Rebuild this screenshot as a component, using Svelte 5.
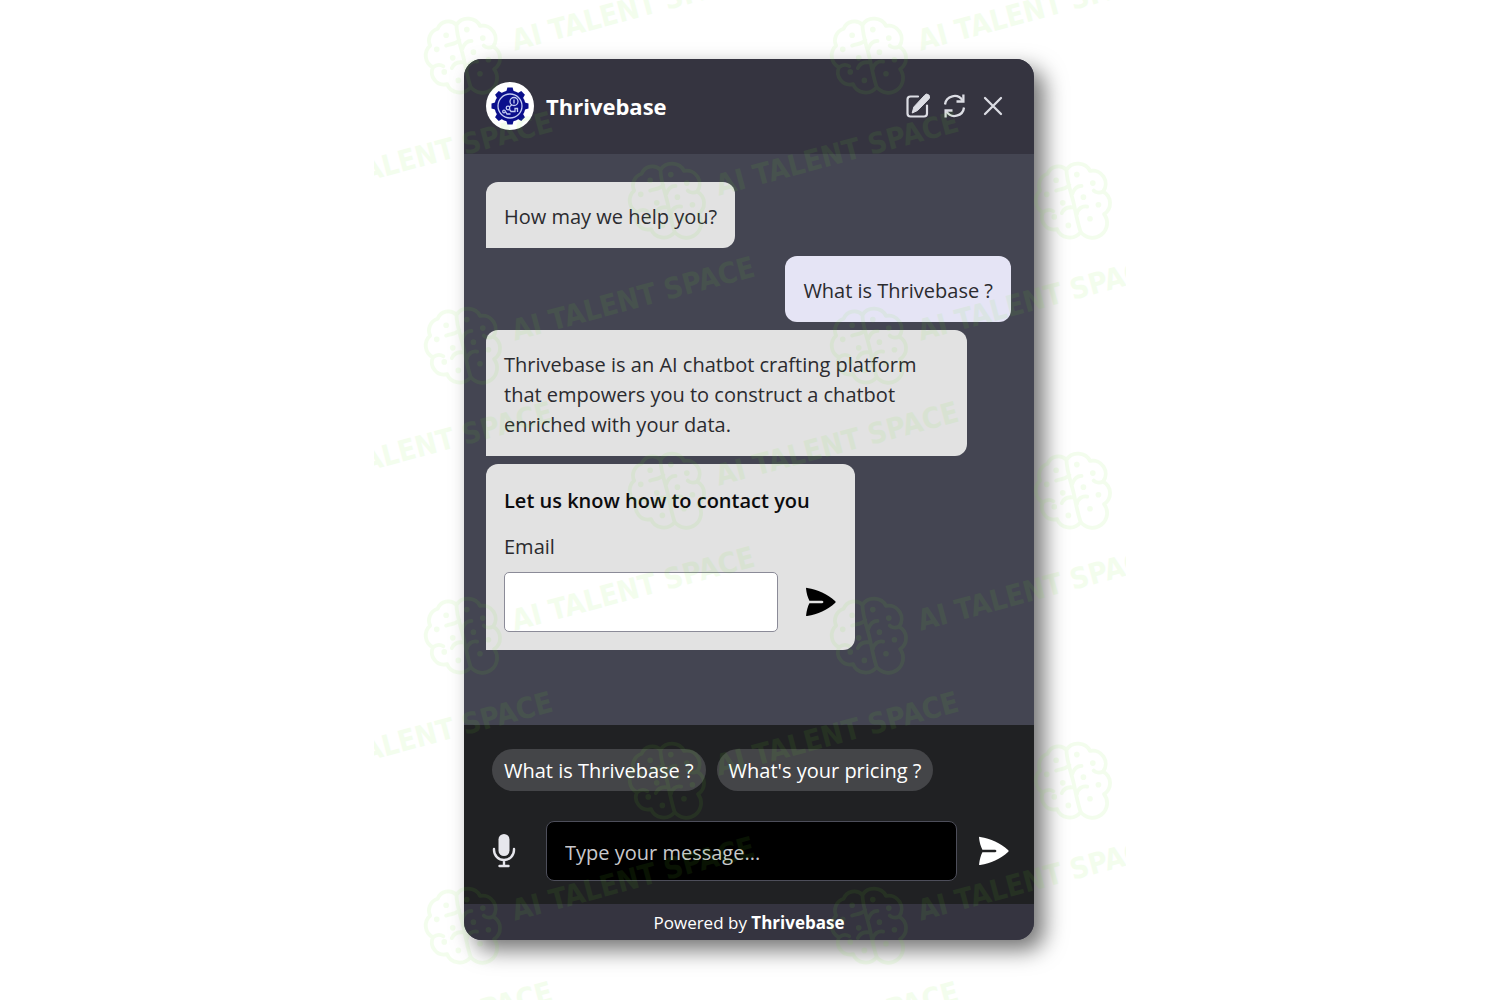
<script lang="ts">
  type Message = { from: "bot" | "user"; text: string };

  const messages: Message[] = [
    { from: "bot", text: "How may we help you?" },
    { from: "user", text: "What is Thrivebase ?" },
    {
      from: "bot",
      text: "Thrivebase is an AI chatbot crafting platform that empowers you to construct a chatbot enriched with your data."
    }
  ];
  const suggestions = ["What is Thrivebase ?", "What's your pricing ?"];

  let email = $state("");
  let draft = $state("");

  // Staggered rows: odd rows shift left by half a tile.
  const marks = Array.from({ length: 8 }, (_, row) =>
    [0, 1, 2]
      .map((col) => ({ x: (row % 2 ? -112 : 90) + col * 406, y: 55 + row * 145 }))
      .filter((mark) => mark.x < 752)
  ).flat();
</script>

{#snippet sendIcon()}
  <svg width="32" height="30" viewBox="0 0 32 30" aria-hidden="true">
    <path
      fill="currentColor"
      d="M1 1.6C1 .9 1.5.8 2.2.9C13 2.7 22 6.5 30.3 14.2C30.8 14.7 30.8 15.3 30.3 15.8C22 23.5 13 27.3 2.2 29.1C1.5 29.2.9 29 1.1 28.2C1.7 23.5 2.7 19.5 4.4 16.2H17.2C18.8 16.2 18.8 13.8 17.2 13.8H4.4C2.7 10.5 1.5 6.5 1 1.6Z"
    />
  </svg>
{/snippet}

<main>
  <section class="chat" aria-label="Thrivebase chat">
    <header>
      <svg class="avatar" viewBox="0 0 48 48" aria-hidden="true">
        <circle cx="24" cy="24" r="24" fill="#fff" />
        <g fill="#0b0f8c">
          <circle cx="24" cy="24" r="15.5" />
          {#each [0, 45, 90, 135, 180, 225, 270, 315] as angle}
            <path d="M20.2 10 21.4 5.5H26.6L27.8 10Z" transform="rotate({angle} 24 24)" />
          {/each}
        </g>
        <g fill="none" stroke="#c3cbf2" stroke-width="1.3">
          <circle cx="24" cy="24" r="12" />
          <circle cx="28" cy="19.5" r="4" />
          <circle cx="22" cy="26" r="1.8" />
          <circle cx="18" cy="29.5" r="1.3" />
          <path d="M28 17.5V21.5M23.5 27.5 25 29.5H29V26.5H31.5V30M19.5 29.5 21 32H24.5M24 24.5 26 22.5" />
        </g>
      </svg>
      <h1>Thrivebase</h1>
      <div class="actions">
        <button type="button" aria-label="New chat">
          <svg width="26" height="26" viewBox="0 0 26 26" aria-hidden="true">
            <path
              d="M14 3.5H6.5A3 3 0 0 0 3.5 6.5V20.5A3 3 0 0 0 6.5 23.5H20A3 3 0 0 0 23 20.5V12.5"
              fill="none"
              stroke="currentColor"
              stroke-width="2.2"
              stroke-linecap="round"
            />
            <path
              d="M20.7 2.2A2.7 2.7 0 0 1 25 5.8L13.6 17.5 8.2 20 9.8 14Z"
              fill="currentColor"
              stroke="currentColor"
              stroke-linejoin="round"
            />
          </svg>
        </button>
        <button type="button" aria-label="Restart">
          <svg width="26" height="26" viewBox="0 0 26 26" aria-hidden="true">
            <g fill="none" stroke="currentColor" stroke-width="2.3">
              <path d="M3 11.5A9.5 9.5 0 0 1 20.5 7.5M22 14.5A9.5 9.5 0 0 1 4.5 18.5" />
              <path d="M21.4 1.5V8.5H14.5M3.6 24.5V17.5H10.5" />
            </g>
          </svg>
        </button>
        <button type="button" aria-label="Close">
          <svg width="26" height="26" viewBox="0 0 26 26" aria-hidden="true">
            <path d="M5 5 21 21M21 5 5 21" stroke="currentColor" stroke-width="2.3" stroke-linecap="round" />
          </svg>
        </button>
      </div>
    </header>

    <div class="messages">
      {#each messages as message}
        <p class="bubble" class:user={message.from === "user"}>{message.text}</p>
      {/each}
      <form class="bubble contact" onsubmit={(e) => e.preventDefault()}>
        <h2>Let us know how to contact you</h2>
        <label for="email">Email</label>
        <div class="field">
          <input id="email" type="email" bind:value={email} />
          <button type="submit" aria-label="Send email">{@render sendIcon()}</button>
        </div>
      </form>
    </div>

    <div class="composer">
      <div class="suggestions">
        {#each suggestions as suggestion}
          <button type="button" onclick={() => (draft = suggestion)}>{suggestion}</button>
        {/each}
      </div>
      <form class="entry" onsubmit={(e) => e.preventDefault()}>
        <button class="mic" type="button" aria-label="Record a message">
          <svg width="24" height="36" viewBox="0 0 24 36" aria-hidden="true">
            <rect x="6.5" y="1" width="11" height="22" rx="5.5" fill="currentColor" />
            <path
              d="M2 16V17A10 10 0 0 0 22 17V16M12 27V33M7.5 33H16.5"
              fill="none"
              stroke="currentColor"
              stroke-width="2.4"
              stroke-linecap="round"
            />
          </svg>
        </button>
        <input type="text" aria-label="Message" placeholder="Type your message..." bind:value={draft} />
        <button class="send" type="submit" aria-label="Send message">{@render sendIcon()}</button>
      </form>
    </div>

    <footer>Powered by <strong>Thrivebase</strong></footer>
  </section>

  <svg class="watermark" aria-hidden="true">
    {#each marks as mark}
      <g transform="translate({mark.x} {mark.y})">
        <g transform="scale(.94)">
          <path
            class="brain"
            d="M-8-32A14 13 0 0 1 17-31A14 14 0 0 1 31-9A14 14 0 0 1 32 15A14 14 0 0 1 7 34A14 13 0 0 1-18 31A13 13 0 0 1-33 13A14 14 0 0 1-36-10A13 13 0 0 1-28-28A12 12 0 0 1-8-32ZM-8-32C-8-20-2-5 0 5S4 25 7 34M-2-6C0-12 3-15 8-15M3 15C4 9 9 6 14 7M-5-16C-9-11-15-12-19-10M0 8C-6 7-11 9-13 14M31-9C27-7 23-8 21-10M-33 13C-29 10-25 10-22 12"
          />
          <path class="dots" d="M3-27h0M20-18h0M10-3h0M26 5h0M17 20h0M-6 27h0M-21 18h0M-19-21h0M-29-6h0M-12 3h0" />
        </g>
        {#if mark.x < 690}
          <text x="50" y="9" transform="rotate(-15)">AI TALENT SPACE</text>
        {/if}
      </g>
    {/each}
  </svg>
</main>

<style>
  :global(body) {
    margin: 0;
    background: #fff;
  }
  main {
    position: relative;
    box-sizing: border-box;
    min-height: 100vh;
    padding: 59px 18px 59px 16px;
    overflow: hidden;
    font-family: "Segoe UI", "Open Sans", "Noto Sans", sans-serif;
    font-size: 20px;
    line-height: 30px;
  }
  .chat {
    max-width: 570px;
    margin: 0 auto;
    border-radius: 18px;
    overflow: hidden;
    background: #444552;
    box-shadow: 10px 10px 22px rgb(0 0 0 / 55%);
  }
  header {
    display: flex;
    align-items: center;
    gap: 12px;
    padding: 23px 28px 24px 22px;
    background: #353440;
    color: #fff;
  }
  .avatar { width: 48px; height: 48px; flex: none; }
  h1 { margin: 0; font-size: 22px; font-weight: 700; }
  .actions {
    display: flex;
    gap: 12px;
    margin-left: auto;
    color: #dcdde4;
  }
  button {
    display: grid;
    place-items: center;
    padding: 0;
    border: none;
    background: none;
    color: inherit;
    font: inherit;
    cursor: pointer;
  }
  input {
    box-sizing: border-box;
    min-width: 0;
    height: 60px;
    padding: 2px 18px 0;
    font: inherit;
  }
  .messages {
    display: flex;
    flex-direction: column;
    align-items: flex-start;
    gap: 8px;
    padding: 28px 23px 75px 22px;
  }
  .bubble {
    box-sizing: border-box;
    max-width: 481px;
    margin: 0;
    padding: 20px 18px 16px;
    border-radius: 12px 12px 12px 0;
    background: #e2e2e2;
    color: #2b2b2f;
  }
  .bubble.user {
    align-self: flex-end;
    border-radius: 12px;
    background: #e5e4f5;
  }
  .contact { padding: 22px 18px 18px; }
  h2 {
    margin: 0 0 16px;
    font-size: 20px;
    font-weight: 600;
    line-height: 30px;
    color: #0c0c0e;
  }
  label { display: block; margin-bottom: 10px; }
  .field {
    display: flex;
    align-items: center;
    gap: 27px;
    color: #000;
  }
  .field input {
    width: 274px;
    border: 1px solid #8b8b98;
    border-radius: 5px;
    background: #fff;
  }
  .composer {
    padding: 24px 24px 23px 28px;
    background: #202123;
    color: #fff;
  }
  .suggestions {
    display: flex;
    flex-wrap: wrap;
    gap: 11px;
    margin-bottom: 30px;
  }
  .suggestions button {
    height: 42px;
    padding: 2px 12px 0;
    border-radius: 21px;
    background: #444548;
  }
  .entry {
    display: flex;
    align-items: center;
  }
  .entry input {
    flex: 1;
    margin: 0 21px 0 30px;
    border: 1px solid #4d4e5a;
    border-radius: 8px;
    background: #000;
    color: #fff;
  }
  .entry input::placeholder { color: #c9c9cd; opacity: 1; }
  .mic { color: #e6e6ec; }
  footer {
    padding: 4px 0 2px;
    background: #353440;
    color: #fff;
    font-size: 17px;
    text-align: center;
  }
  /* Tiled brand mark laid over the widget and the page around it. */
  .watermark {
    position: absolute;
    top: 0;
    left: 50%;
    width: 752px;
    height: 100%;
    transform: translateX(-50%);
    overflow: hidden;
    pointer-events: none;
    opacity: .08;
  }
  .watermark text {
    fill: #6eeb28;
    font-family: "Liberation Sans Narrow", "DejaVu Sans Condensed", sans-serif;
    font-size: 29px;
    font-weight: 700;
  }
  .brain, .dots {
    fill: none;
    stroke: #6eeb28;
    stroke-width: 4;
    stroke-linecap: round;
    stroke-linejoin: round;
  }
  .dots { stroke-width: 6; }
</style>
